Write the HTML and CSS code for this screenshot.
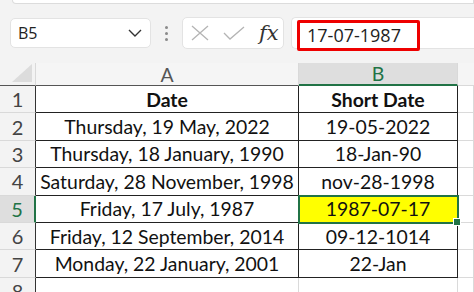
FILE: index.html
```html
<!DOCTYPE html>
<html lang="en">
<head>
  <meta charset="UTF-8" />
  <title>Short Date</title>
  <link rel="stylesheet" href="styles.css">
</head>
<body>
  <div class="ribbon"></div>

  <!-- Name box + formula bar -->
  <div class="fbar">
    <div class="namebox">
      <span>B5</span>
      <svg width="14" height="8" viewBox="0 0 14 8"><path d="M1 1 L7 7 L13 1" fill="none" stroke="#333" stroke-width="1.4"/></svg>
    </div>
    <div class="grip"><i></i><i></i><i></i></div>
    <div class="fxbox">
      <svg width="18" height="16" viewBox="0 0 18 16"><path d="M1 1 L17 15 M17 1 L1 15" stroke="#b4b4b4" stroke-width="1.3" fill="none"/></svg>
      <svg width="22" height="14" viewBox="0 0 22 14"><path d="M1 7 L7 13 L21 1" stroke="#b4b4b4" stroke-width="1.3" fill="none"/></svg>
      <span class="fx">fx</span>
    </div>
    <div class="formula">
      <span class="value">17-07-1987</span>
    </div>
  </div>

  <!-- Sheet -->
  <div class="sheet">
    <div class="corner"></div>
    <div class="colhead">A</div>
    <div class="colhead sel">B</div>
    <div class="colhead rest"></div>

    <div class="rowhead">1</div>
    <div class="cell data bold">Date</div>
    <div class="cell data bold">Short Date</div>
    <div class="cell"></div>

    <div class="rowhead">2</div>
    <div class="cell data">Thursday, 19 May, 2022</div>
    <div class="cell data">19-05-2022</div>
    <div class="cell"></div>

    <div class="rowhead">3</div>
    <div class="cell data">Thursday, 18 January, 1990</div>
    <div class="cell data">18-Jan-90</div>
    <div class="cell"></div>

    <div class="rowhead">4</div>
    <div class="cell data">Saturday, 28 November, 1998</div>
    <div class="cell data">nov-28-1998</div>
    <div class="cell"></div>

    <div class="rowhead sel">5</div>
    <div class="cell data">Friday, 17 July, 1987</div>
    <div class="cell data active">1987-07-17</div>
    <div class="cell"></div>

    <div class="rowhead">6</div>
    <div class="cell data">Friday, 12 September, 2014</div>
    <div class="cell data">09-12-1014</div>
    <div class="cell"></div>

    <div class="rowhead">7</div>
    <div class="cell data">Monday, 22 January, 2001</div>
    <div class="cell data">22-Jan</div>
    <div class="cell"></div>

    <div class="rowhead">8</div>
    <div class="cell"></div>
    <div class="cell"></div>
    <div class="cell"></div>
  </div>
</body>
</html>
```

FILE: styles.css
```css
body { margin: 0; background: #f3f3f3; font-family: Lato, "Liberation Sans", sans-serif; overflow: hidden; }

/* toolbar */
.ribbon { height: 3px; margin-left: 12px; background: #fff; border: 1px solid #dcdcdc; border-top: none; border-radius: 0 0 0 8px; }
.fbar { display: flex; align-items: center; height: 32px; padding: 13px 0 0 10px; margin-bottom: 14px; font-family: "Open Sans", "Noto Sans", sans-serif; }
.namebox { width: 141px; height: 30px; box-sizing: border-box; display: flex; align-items: center; justify-content: space-between; padding: 0 8px 0 7px; background: #fff; border: 1px solid #e3e3e3; border-radius: 5px; font-size: 16px; color: #222; }
.grip { width: 31px; display: flex; flex-direction: column; align-items: center; gap: 3px; }
.grip i { width: 3px; height: 3px; border-radius: 50%; background: #8a8a8a; }
.fxbox { width: 102px; height: 32px; box-sizing: border-box; display: flex; align-items: center; gap: 14px; padding-left: 8px; background: #fff; border: 1px solid #e3e3e3; border-radius: 5px; }
.fx { font-family: "DejaVu Serif", "Liberation Serif", serif; font-style: italic; font-size: 21px; color: #333; }
.formula { flex: 1; height: 32px; margin-left: 7px; box-sizing: border-box; display: flex; align-items: flex-start; padding: 2px 0 0 5px; background: #fff; border: 1px solid #e3e3e3; border-right: none; border-radius: 5px 0 0 5px; }
.value { border: 3px solid #ee0000; border-radius: 2px; padding: 0 8px 0 7px; font-size: 18px; color: #222; line-height: 25px; width: 102px; }

/* grid */
.sheet { display: grid; grid-template-columns: 36px 263px 159px 1fr; grid-template-rows: 23px repeat(8, 27.4px); font-size: 19.4px; color: #111; }
.sheet > div { box-sizing: border-box; display: flex; align-items: center; justify-content: center; white-space: nowrap; }
.corner { position: relative; background: #f3f3f3; border-right: 1px solid #d9d9d9; border-bottom: 1px solid #555; }
.corner::after { content: ""; position: absolute; right: 3px; bottom: 3px; border-left: 20px solid transparent; border-bottom: 18px solid #dcdcdc; }
.colhead { background: #f5f5f5; color: #555; border-right: 1px solid #d9d9d9; border-bottom: 1px solid #555; }
.colhead.sel { background: #dedede; color: #217346; border-bottom: 2px solid #217346; }
.colhead.rest { border-bottom-color: #d9d9d9; border-right: none; }
.rowhead { background: #f3f3f3; color: #444; font-size: 20px; border-right: 1px solid #333; border-bottom: 1px solid #d9d9d9; }
.rowhead.sel { background: #dedede; color: #217346; border-right: 2px solid #217346; }
.cell { background: #fff; border-right: 1px solid #dadada; border-bottom: 1px solid #dadada; }
.cell.data { border-right-color: #222; border-bottom-color: #222; }
.bold { font-weight: bold; }
.cell.active { position: relative; background: #ffff00; outline: 2px solid #217346; outline-offset: -1px; }
.cell.active::after { content: ""; position: absolute; right: -4px; bottom: -4px; width: 6px; height: 6px; background: #217346; border: 1px solid #fff; }
```
